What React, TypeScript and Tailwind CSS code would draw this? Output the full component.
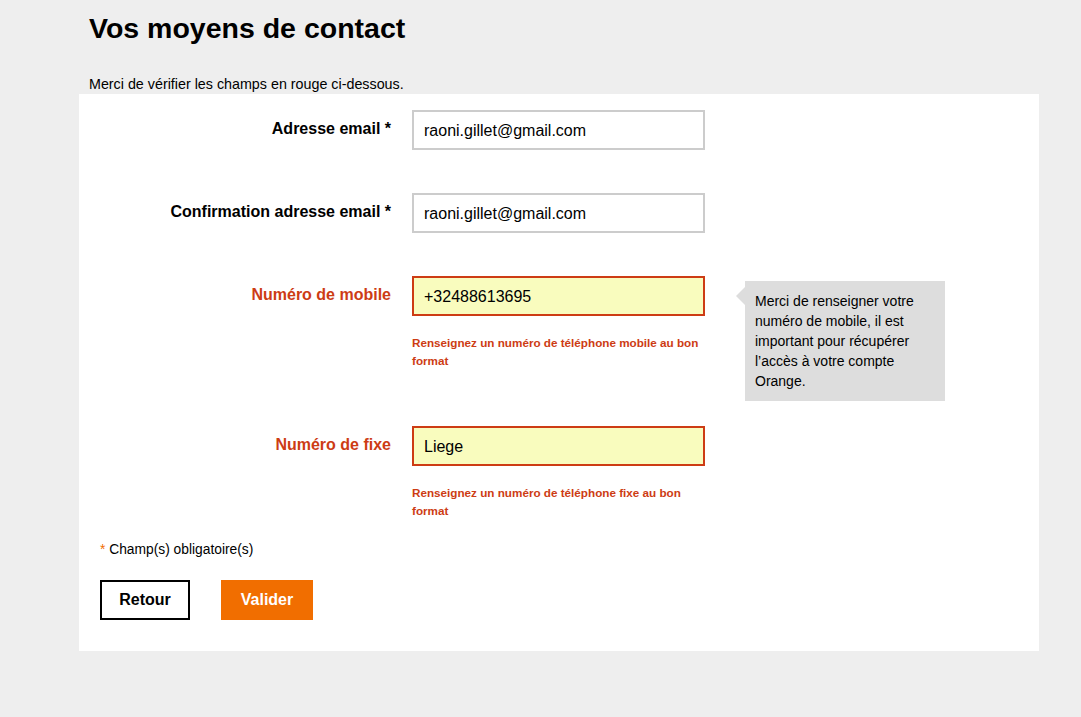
import React from "react";

const font = { fontFamily: '"Liberation Sans", Arial, sans-serif' };

function Row({
  label,
  value,
  error,
  errorText,
  children,
}: {
  label: string;
  value: string;
  error?: boolean;
  errorText?: string;
  children?: React.ReactNode;
}) {
  return (
    <div className="relative flex">
      <div
        className={`w-[312px] shrink-0 text-right pt-[9px] text-[16px] leading-[20px] font-bold ${
          error ? "text-[#cd3c14]" : "text-black"
        }`}
      >
        {label}
      </div>
      <div className="ml-[21px] w-[293px] shrink-0">
        <div
          className={`h-[40px] border-2 px-[10px] pt-[1px] flex items-center text-[16px] text-black ${
            error ? "border-[#cd3c14] bg-[#f9fcbe]" : "border-[#cccccc] bg-white"
          }`}
        >
          {value}
        </div>
        {errorText && (
          <div className="mt-[18px] text-[11.7px] leading-[18px] font-bold text-[#cd3c14]">
            {errorText}
          </div>
        )}
      </div>
      {children}
    </div>
  );
}

export default function App() {
  return (
    <div className="min-h-[717px] bg-[#eeeeee] text-black" style={font}>
      <div className="pl-[89px] pt-[11px] pb-[1px]">
        <h1 className="text-[28.5px] leading-[34px] font-bold">Vos moyens de contact</h1>
        <p className="mt-[30px] text-[14.3px] leading-[18px]">
          Merci de vérifier les champs en rouge ci-dessous.
        </p>
      </div>
      <div className="ml-[79px] w-[960px] bg-white pt-[16px] pb-[31px]">
        <div className="mb-[43px]">
          <Row label="Adresse email *" value="raoni.gillet@gmail.com" />
        </div>
        <div className="mb-[43px]">
          <Row label="Confirmation adresse email *" value="raoni.gillet@gmail.com" />
        </div>
        <div className="mb-[56px]">
          <Row
            label="Numéro de mobile"
            value="+32488613695"
            error
            errorText="Renseignez un numéro de téléphone mobile au bon format"
          >
            <div className="absolute left-[666px] top-[5px] w-[200px] bg-[#dddddd] px-[10px] pt-[10px] pb-[10px] text-[14px] leading-[20px]">
              <div className="absolute left-[-9px] top-[6px] h-0 w-0 border-y-[9px] border-r-[9px] border-y-transparent border-r-[#dddddd]" />
              Merci de renseigner votre numéro de mobile, il est important pour récupérer l’accès à votre compte Orange.
            </div>
          </Row>
        </div>
        <Row
          label="Numéro de fixe"
          value="Liege"
          error
          errorText="Renseignez un numéro de téléphone fixe au bon format"
        />
        <p className="mt-[21px] ml-[21px] text-[13.8px] leading-[18px]">
          <span className="text-[#f16e00]">*</span> Champ(s) obligatoire(s)
        </p>
        <div className="mt-[21px] ml-[21px] flex gap-[31px]">
          <button className="h-[40px] w-[90px] border-2 border-black bg-white text-[16px] font-bold text-black">
            Retour
          </button>
          <button className="h-[40px] w-[92px] bg-[#f16e00] text-[16px] font-bold text-white">
            Valider
          </button>
        </div>
      </div>
    </div>
  );
}
